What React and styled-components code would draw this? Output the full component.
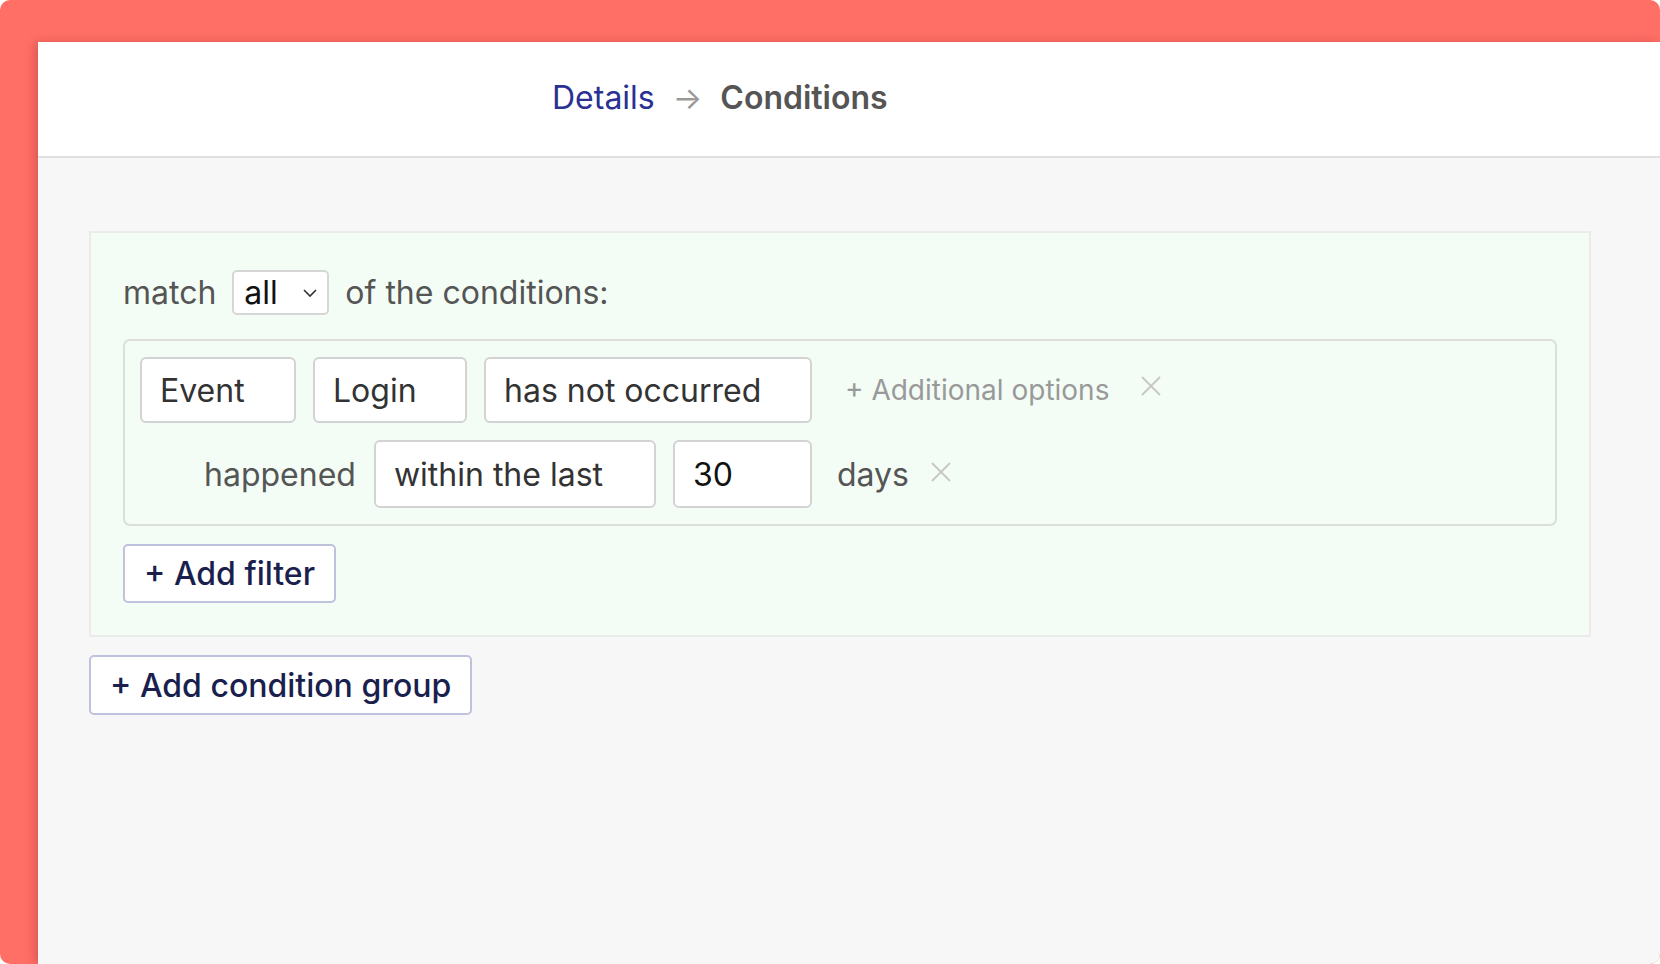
import React from 'react';
import styled, {createGlobalStyle} from 'styled-components';

const GlobalStyle = createGlobalStyle`
  html, body {
    margin: 0;
    padding: 0;
    background: #ffffff;
  }
  body {
    font-family: Inter, "Noto Sans", sans-serif;
  }
`;

const Frame = styled.div`
  display: flex;
  height: 964px;
  padding: 42px 0 0 38px;
  box-sizing: border-box;
  background: #ff6f66;
  border-radius: 10px;
  overflow: hidden;
`;

const Window = styled.div`
  flex: 1;
  display: flex;
  flex-direction: column;
  background: #f7f7f7;
  border-top-left-radius: 5px;
  box-shadow: -4px 0 10px rgba(120, 30, 20, 0.25);
`;

const Header = styled.div`
  height: 116px;
  box-sizing: border-box;
  display: flex;
  align-items: center;
  padding: 0 0 4px 514px;
  background: #ffffff;
  border-bottom: 2px solid #e0e0e0;
  font-size: 32px;
  gap: 18px;
`;

const Crumb = styled.span`
  color: ${(p) => (p.current ? '#555555' : '#2a3192')};
  font-weight: ${(p) => (p.current ? 600 : 400)};
`;

const Arrow = styled.span`
  color: #999999;
  font-size: 31px;
`;

const Content = styled.div`
  display: flex;
  flex-direction: column;
  align-items: flex-start;
  gap: 18px;
  padding: 73px 0 0 51px;
`;

const Group = styled.div`
  width: 1502px;
  box-sizing: border-box;
  background: #f3fdf5;
  border: 2px solid #ebebeb;
  padding: 37px 32px 32px 32px;
  display: flex;
  flex-direction: column;
  align-items: flex-start;
  gap: 18px;
`;

const MatchRow = styled.div`
  display: flex;
  align-items: center;
  gap: 16px;
  margin-bottom: 6px;
  font-size: 32px;
  color: #555555;
`;

const SelectBox = styled.div`
  width: 97px;
  height: 45px;
  box-sizing: border-box;
  display: flex;
  align-items: center;
  justify-content: space-between;
  padding: 0 8px 0 10px;
  background: #ffffff;
  border: 2px solid #d6d6d6;
  border-radius: 5px;
  color: #111111;
`;

const FilterBox = styled.div`
  width: 100%;
  box-sizing: border-box;
  border: 2px solid #dcdedc;
  border-radius: 7px;
  padding: 16px 15px 16px 15px;
  display: flex;
  flex-direction: column;
  gap: 17px;
`;

const Row = styled.div`
  display: flex;
  align-items: center;
  padding-left: ${(p) => p.indent || 0}px;
`;

const Field = styled.div`
  width: ${(p) => p.w}px;
  height: ${(p) => p.h || 66}px;
  box-sizing: border-box;
  display: flex;
  align-items: center;
  padding-left: 18px;
  margin-right: ${(p) => p.mr || 17}px;
  background: #ffffff;
  border: 2px solid #d3d3d3;
  border-radius: 6px;
  font-size: 32px;
  color: ${(p) => (p.dark ? '#111111' : '#333333')};
`;

const Label = styled.span`
  font-size: 32px;
  color: #555555;
  margin-right: ${(p) => p.mr || 0}px;
`;

const Hint = styled.span`
  font-size: 28px;
  color: #999999;
  margin: 0 31px 0 16px;
`;

const Close = styled.span`
  display: flex;
  color: #c8c8c8;
  margin-top: ${(p) => p.up || 0}px;
`;

const Button = styled.button`
  height: ${(p) => p.h}px;
  padding: 0 19px;
  box-sizing: border-box;
  background: #ffffff;
  border: 2px solid #bfc2dd;
  border-radius: 5px;
  font-family: Inter, sans-serif;
  font-size: 32px;
  font-weight: 500;
  color: #1b1f4e;
`;

const XIcon = () => (
  <svg width="22" height="22" viewBox="0 0 22 22" fill="none" stroke="currentColor" strokeWidth="2">
    <path d="M2 2L20 20M20 2L2 20" />
  </svg>
);

const Chevron = () => (
  <svg width="18" height="12" viewBox="0 0 18 12" fill="none" stroke="#333" strokeWidth="1.6">
    <path d="M3 3l6 6 6-6" />
  </svg>
);

export default function App() {
  return (
    <>
      <GlobalStyle />
      <Frame>
        <Window>
          <Header>
            <Crumb>Details</Crumb>
            <Arrow>→</Arrow>
            <Crumb current>Conditions</Crumb>
          </Header>
          <Content>
            <Group>
              <MatchRow>
                <span>match</span>
                <SelectBox>
                  <span>all</span>
                  <Chevron />
                </SelectBox>
                <span>of the conditions:</span>
              </MatchRow>
              <FilterBox>
                <Row>
                  <Field w={156}>Event</Field>
                  <Field w={154}>Login</Field>
                  <Field w={328}>has not occurred</Field>
                  <Hint>+ Additional options</Hint>
                  <Close up={-8}><XIcon /></Close>
                </Row>
                <Row indent={64}>
                  <Label mr={18}>happened</Label>
                  <Field w={282} h={68}>within the last</Field>
                  <Field w={139} h={68} mr={25} dark>30</Field>
                  <Label mr={21}>days</Label>
                  <Close up={-4}><XIcon /></Close>
                </Row>
              </FilterBox>
              <Button h={59}>+ Add filter</Button>
            </Group>
            <Button h={60}>+ Add condition group</Button>
          </Content>
        </Window>
      </Frame>
    </>
  );
}
